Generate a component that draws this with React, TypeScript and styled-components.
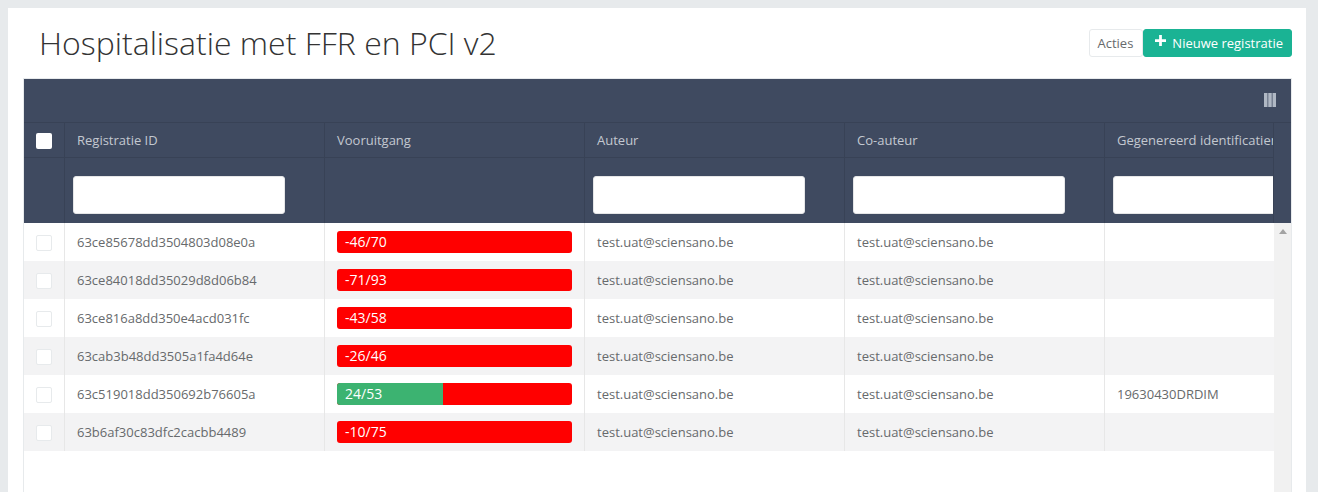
import React from 'react'
import styled, { createGlobalStyle } from 'styled-components'

const rows = [
  { id: '63ce85678dd3504803d08e0a', score: -46, total: 70, generated: '' },
  { id: '63ce84018dd35029d8d06b84', score: -71, total: 93, generated: '' },
  { id: '63ce816a8dd350e4acd031fc', score: -43, total: 58, generated: '' },
  { id: '63cab3b48dd3505a1fa4d64e', score: -26, total: 46, generated: '' },
  { id: '63c519018dd350692b76605a', score: 24, total: 53, generated: '19630430DRDIM' },
  { id: '63b6af30c83dfc2cacbb4489', score: -10, total: 75, generated: '' }
]

const GlobalStyle = createGlobalStyle`
  html, body {
    margin: 0;
    height: 492px;
    overflow: hidden;
    background: #e7eaec;
    font-family: "Open Sans", sans-serif;
    font-size: 13px;
    color: #676a6c;
  }
  * {
    box-sizing: border-box;
  }
`

const Page = styled.div`
  height: 492px;
  padding: 8px 12px 0 8px;
`

const Card = styled.div`
  height: 484px;
  background: #fff;
  padding: 0 14px 0 15px;
  overflow: hidden;
`

const TitleRow = styled.div`
  height: 70px;
  display: flex;
  align-items: flex-start;
  justify-content: space-between;
`

const Title = styled.h1`
  margin: 12px 0 0 16px;
  font-size: 32px;
  line-height: 45px;
  font-weight: 300;
  color: #333;
`

const Actions = styled.div`
  display: flex;
  margin-top: 21px;
`

const ActionButton = styled.button`
  height: 28px;
  padding: 0 9px 0 8px;
  border: 1px solid #e7eaec;
  border-radius: 3px;
  background: #fff;
  color: #676a6c;
  font: 13px "Open Sans", sans-serif;
`

const PrimaryButton = styled(ActionButton)`
  display: flex;
  align-items: center;
  gap: 6px;
  padding: 0 8px 0 11px;
  border-color: #1ab394;
  background: #1ab394;
  color: #fff;
`

const Plus = styled.svg`
  width: 11px;
  height: 11px;
  margin-top: -5px;
  fill: #fff;
`

const Grid = styled.div`
  height: 430px;
  border: 1px solid #e7eaec;
`

const Head = styled.div`
  background: #3f4a60;
  color: #c3c8d0;
`

const Toolbar = styled.div`
  height: 44px;
  display: flex;
  align-items: center;
  justify-content: flex-end;
  padding-right: 15px;
  border-bottom: 1px solid #384256;
`

const ColumnsIcon = styled.svg`
  width: 12px;
  height: 14px;
  margin-top: -1px;
  fill: #b0b8c4;
`

const HeadClip = styled.div`
  width: 1250px;
  overflow: hidden;
  border-right: 1px solid #384256;
`

const HeadRow = styled.div<{ $height: number }>`
  display: grid;
  grid-template-columns: 41px repeat(5, 260px);
  width: 1341px;
  height: ${({ $height }) => $height}px;
  border-bottom: 1px solid #384256;
`

const FilterRow = styled(HeadRow)`
  border-bottom: 0;
`

const HeadCell = styled.div`
  display: flex;
  align-items: center;
  padding: 0 12px;
  white-space: nowrap;
  overflow: hidden;
  border-right: 1px solid #384256;
`

const CheckCell = styled(HeadCell)`
  justify-content: center;
  padding: 0;
`

const FilterCell = styled(HeadCell)`
  align-items: flex-end;
  padding: 0 19px 9px 8px;
`

const FilterInput = styled.input`
  display: block;
  width: 212px;
  height: 38px;
  flex: none;
  border: 1px solid #e5e6e7;
  border-radius: 3px;
  background: #fff;
`

const HeadCheck = styled.span`
  width: 16px;
  height: 16px;
  margin-top: 2px;
  border-radius: 2px;
  background: #fff;
`

const Body = styled.div`
  display: grid;
  grid-template-columns: 1fr 17px;
  height: 285px;
`

const RowList = styled.div`
  overflow: hidden;
`

const Row = styled.div`
  display: grid;
  grid-template-columns: 41px repeat(4, 260px) 168px;
  height: 38px;
  &:nth-child(even) {
    background: #f3f3f4;
  }
`

const Cell = styled.div`
  display: flex;
  align-items: center;
  padding: 0 12px;
  white-space: nowrap;
  border-right: 1px solid #e7e7e7;
  &:last-child {
    border-right: 0;
  }
`

const BoxCell = styled(Cell)`
  justify-content: center;
  padding: 0;
`

const RowCheck = styled.span`
  width: 16px;
  height: 16px;
  margin-top: 2px;
  border: 1px solid #e7eaec;
  border-radius: 2px;
  background: #fff;
`

const Bar = styled.div`
  position: relative;
  width: 235px;
  height: 22px;
  border-radius: 3px;
  background: #ff0000;
  overflow: hidden;
`

const BarFill = styled.div`
  height: 100%;
  background: #3cb371;
`

const BarLabel = styled.span`
  position: absolute;
  left: 8px;
  top: 0;
  color: #fff;
  font-size: 14px;
  line-height: 22px;
`

const Scrollbar = styled.div`
  background: #f1f1f1;
  display: flex;
  justify-content: center;
  padding-top: 6px;
`

const ScrollArrow = styled.span`
  width: 0;
  height: 0;
  border-left: 4px solid transparent;
  border-right: 4px solid transparent;
  border-bottom: 5px solid #a3a3a3;
`

export default function App() {
  return (
    <Page>
      <GlobalStyle />
      <Card>
        <TitleRow>
          <Title>Hospitalisatie met FFR en PCI v2</Title>
          <Actions>
            <ActionButton>Acties</ActionButton>
            <PrimaryButton>
              <Plus viewBox="0 0 12 12">
                <path d="M4.5 0h3v4.500H12v3H7.500V12h-3V7.500H0v-3h4.500z" />
              </Plus>
              Nieuwe registratie
            </PrimaryButton>
          </Actions>
        </TitleRow>
        <Grid>
          <Head>
            <Toolbar>
              <ColumnsIcon viewBox="0 0 12 14">
                <path d="M0 0h3.500v14H0zM4.250 0h3.500v14h-3.500zM8.500 0H12v14H8.500z" />
              </ColumnsIcon>
            </Toolbar>
            <HeadClip>
              <HeadRow $height={35}>
                <CheckCell>
                  <HeadCheck />
                </CheckCell>
                <HeadCell>Registratie ID</HeadCell>
                <HeadCell>Vooruitgang</HeadCell>
                <HeadCell>Auteur</HeadCell>
                <HeadCell>Co-auteur</HeadCell>
                <HeadCell>Gegenereerd identificatienummer</HeadCell>
              </HeadRow>
              <FilterRow $height={65}>
                <HeadCell />
                <FilterCell>
                  <FilterInput />
                </FilterCell>
                <HeadCell />
                <FilterCell>
                  <FilterInput />
                </FilterCell>
                <FilterCell>
                  <FilterInput />
                </FilterCell>
                <FilterCell>
                  <FilterInput />
                </FilterCell>
              </FilterRow>
            </HeadClip>
          </Head>
          <Body>
            <RowList>
              {rows.map(row => (
                <Row key={row.id}>
                  <BoxCell>
                    <RowCheck />
                  </BoxCell>
                  <Cell>{row.id}</Cell>
                  <Cell>
                    <Bar>
                      {row.score > 0 && <BarFill style={{ width: `${(row.score / row.total) * 100}%` }} />}
                      <BarLabel>
                        {row.score}/{row.total}
                      </BarLabel>
                    </Bar>
                  </Cell>
                  <Cell>test.uat@sciensano.be</Cell>
                  <Cell>test.uat@sciensano.be</Cell>
                  <Cell>{row.generated}</Cell>
                </Row>
              ))}
            </RowList>
            <Scrollbar>
              <ScrollArrow />
            </Scrollbar>
          </Body>
        </Grid>
      </Card>
    </Page>
  )
}
